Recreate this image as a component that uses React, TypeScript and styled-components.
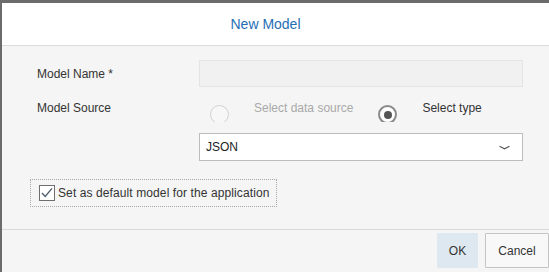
import React from 'react'
import styled, { createGlobalStyle } from 'styled-components'

const GlobalStyle = createGlobalStyle`
  html, body {
    margin: 0;
    padding: 0;
    background: #6b6b6b;
    font-family: 'Liberation Sans', Arial, sans-serif;
  }
`

const Dialog = styled.div`
  width: 547px;
  height: 269px;
  margin-top: 3px;
  margin-left: 2px;
  background: #f5f5f5;
  display: flex;
  flex-direction: column;
  overflow: hidden;
`

const Header = styled.div`
  height: 42px;
  background: #ffffff;
  border-bottom: 1px solid #dcdcdc;
  display: flex;
  align-items: center;
  justify-content: center;
  padding-right: 20px;
`

const Title = styled.h1`
  margin: 0;
  font-size: 14px;
  font-weight: normal;
  color: #1f6fb5;
`

const Body = styled.div`
  height: 184px;
  padding: 14px 0 0 28px;
  box-sizing: border-box;
  border-bottom: 1px solid #d9d9d9;
`

const FormRow = styled.div<{ $height: number; $gap: number }>`
  display: flex;
  align-items: ${(p) => (p.$height > 24 ? 'center' : 'flex-start')};
  height: ${(p) => p.$height}px;
  margin-bottom: ${(p) => p.$gap}px;
  overflow: hidden;
`

const Label = styled.label<{ $top?: number }>`
  width: 169px;
  padding-left: 7px;
  font-size: 12px;
  line-height: 14px;
  color: #333333;
  padding-top: ${(p) => p.$top ?? 0}px;
  box-sizing: border-box;
  flex-shrink: 0;
`

const TextInput = styled.div`
  width: 324px;
  height: 27px;
  box-sizing: border-box;
  background: #f1f1f1;
  border: 1px solid #e4e4e4;
`

const RadioGroup = styled.div`
  display: flex;
  align-items: flex-start;
  padding-left: 11px;
`

const RadioOption = styled.div`
  display: flex;
  align-items: flex-start;
  margin-right: 25px;
`

const RadioCircle = styled.span<{ $checked?: boolean; $disabled?: boolean }>`
  width: 19px;
  height: 19px;
  margin-top: 5px;
  box-sizing: border-box;
  border-radius: 50%;
  border: ${(p) => (p.$disabled ? '1.5px solid #d2d2d2' : '2px solid #8a8a8a')};
  background: ${(p) => (p.$disabled ? '#f7f7f7' : '#ffffff')};
  display: flex;
  align-items: center;
  justify-content: center;
  &::after {
    content: '';
    display: ${(p) => (p.$checked ? 'block' : 'none')};
    width: 8px;
    height: 8px;
    border-radius: 50%;
    background: #555555;
  }
`

const RadioText = styled.span<{ $disabled?: boolean }>`
  margin-left: 25px;
  font-size: 12px;
  line-height: 14px;
  padding-top: 1px;
  color: ${(p) => (p.$disabled ? '#a9a9a9' : '#333333')};
`

const Select = styled.div`
  width: 324px;
  height: 28px;
  box-sizing: border-box;
  background: #ffffff;
  border: 1px solid #bcbcbc;
  display: flex;
  align-items: center;
  justify-content: space-between;
  padding: 0 12px 0 6px;
  font-size: 12px;
  color: #222222;
`

const CheckArea = styled.label`
  display: inline-flex;
  align-items: center;
  height: 28px;
  width: 247px;
  box-sizing: border-box;
  border: 1px dotted #a8a8a8;
  padding-left: 8px;
  font-size: 12px;
  letter-spacing: 0.1px;
  color: #333333;
`

const CheckBox = styled.span`
  width: 16px;
  height: 16px;
  box-sizing: border-box;
  border: 1px solid #6e6e6e;
  background: #ffffff;
  margin-right: 3px;
  display: flex;
  align-items: center;
  justify-content: center;
`

const Footer = styled.div`
  display: flex;
  justify-content: flex-end;
  gap: 7px;
  padding: 3px 0 0 0;
`

const Button = styled.button<{ $primary?: boolean }>`
  height: 35px;
  padding: 0;
  width: ${(p) => (p.$primary ? '41px' : '64px')};
  font-family: inherit;
  font-size: 12px;
  color: #333333;
  background: ${(p) => (p.$primary ? '#dde8f1' : '#f8f8f8')};
  border: 1px solid ${(p) => (p.$primary ? '#dde8f1' : '#c4c4c4')};
  border-radius: 1px;
`

const Chevron = () => (
  <svg width="11" height="5" viewBox="0 0 11 5">
    <path d="M0.5 1.2 L5.5 3.8 L10.5 1.2" fill="none" stroke="#555" strokeWidth="1.1" />
  </svg>
)

const Check = () => (
  <svg width="14" height="14" viewBox="0 0 14 14">
    <path d="M2 7 L5.2 10.4 L12 2.4" fill="none" stroke="#4e5f70" strokeWidth="1.4" />
  </svg>
)

const App: React.FC = () => {
  return (
    <>
      <GlobalStyle />
      <Dialog>
        <Header>
          <Title>New Model</Title>
        </Header>
        <Body>
          <FormRow $height={27} $gap={13}>
            <Label>Model Name *</Label>
            <TextInput />
          </FormRow>
          <FormRow $height={22} $gap={11}>
            <Label $top={1}>Model Source</Label>
            <RadioGroup>
              <RadioOption>
                <RadioCircle $disabled />
                <RadioText $disabled>Select data source</RadioText>
              </RadioOption>
              <RadioOption>
                <RadioCircle $checked />
                <RadioText>Select type</RadioText>
              </RadioOption>
            </RadioGroup>
          </FormRow>
          <FormRow $height={28} $gap={18}>
            <Label />
            <Select>
              <span>JSON</span>
              <Chevron />
            </Select>
          </FormRow>
          <CheckArea>
            <CheckBox>
              <Check />
            </CheckBox>
            Set as default model for the application
          </CheckArea>
        </Body>
        <Footer>
          <Button $primary>OK</Button>
          <Button>Cancel</Button>
        </Footer>
      </Dialog>
    </>
  )
}

export default App
